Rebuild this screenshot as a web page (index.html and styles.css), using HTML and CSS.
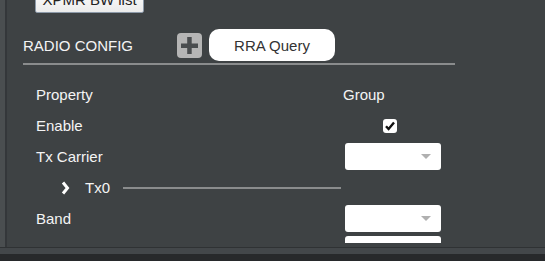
FILE: index.html
```html
<!DOCTYPE html>
<html lang="en">

<head>
    <meta charset="UTF-8">
    <meta name="viewport" content="width=device-width, initial-scale=1.0">
    <title>Radio Config</title>
    <link rel="stylesheet" href="styles.css">
</head>

<body>
    <div class="window">
        <div class="side"></div>
        <main class="panel">
            <button class="btn-top">XPMR BW list</button>
            <div class="header">
                <span class="title">RADIO CONFIG</span>
                <button class="btn-add">
                    <svg width="25" height="25" viewBox="0 0 25 25">
                        <rect x="4" y="10.5" width="17" height="4.5" fill="#4a4d4f" />
                        <rect x="10.2" y="4" width="4.5" height="17" fill="#4a4d4f" />
                    </svg>
                </button>
                <button class="btn-query">RRA Query</button>
            </div>
            <div class="rule"></div>
            <div class="props">
                <div class="row">
                    <span class="label">Property</span>
                    <span class="value">Group</span>
                </div>
                <div class="row">
                    <span class="label">Enable</span>
                    <span class="value">
                        <span class="check">
                            <svg width="14" height="14" viewBox="0 0 14 14">
                                <path d="M3 7.2 L5.6 10 L11 3.6" fill="none" stroke="#111" stroke-width="2.4" />
                            </svg>
                        </span>
                    </span>
                </div>
                <div class="row">
                    <span class="label">Tx Carrier</span>
                    <span class="value"><span class="select"><i class="caret"></i></span></span>
                </div>
                <div class="row group-row">
                    <svg class="chevron" width="9" height="14" viewBox="0 0 9 14">
                        <path d="M2 1.5 L6.5 7 L2 12.5" fill="none" stroke="#fff" stroke-width="3" />
                    </svg>
                    <span class="group-name">Tx0</span>
                    <span class="group-line"></span>
                </div>
                <div class="row">
                    <span class="label">Band</span>
                    <span class="value"><span class="select"><i class="caret"></i></span></span>
                </div>
                <div class="row">
                    <span class="label"></span>
                    <span class="value"><span class="select"><i class="caret"></i></span></span>
                </div>
            </div>
        </main>
    </div>
    <div class="statusbar"></div>
    <div class="bottom"></div>
</body>

</html>
```

FILE: styles.css
```css
* {
    box-sizing: border-box;
}

body {
    margin: 0;
    background-color: #27292b;
    font-family: "Liberation Sans", Arial, sans-serif;
    font-size: 15px;
    color: #f4f4f4;
    overflow: hidden;
}

.window {
    display: flex;
    height: 247px;
}

.side {
    width: 7px;
    background-color: #4a4e50;
    border-right: 2px solid #34373a;
}

.panel {
    flex: 1;
    background-color: #3e4244;
    padding-left: 16px;
    overflow: hidden;
}

.btn-top {
    display: block;
    margin: -14px 0 0 12px;
    width: 109px;
    height: 27px;
    padding: 0;
    border: 1px solid #8d9aa9;
    border-radius: 2px;
    background: linear-gradient(#ffffff, #ebebeb);
    font-family: inherit;
    font-size: 15px;
    line-height: 25px;
    color: #222;
}

.header {
    display: flex;
    align-items: center;
    height: 32px;
    margin-top: 16px;
}

.title {
    width: 154px;
    font-size: 15px;
}

.btn-add {
    width: 25px;
    height: 25px;
    padding: 0;
    border: none;
    border-radius: 4px;
    background-color: #b5b5b5;
}

.btn-add svg {
    display: block;
}

.btn-query {
    width: 126px;
    height: 32px;
    margin-left: 7px;
    padding: 0;
    border: none;
    border-radius: 10px;
    background-color: #fff;
    font-family: inherit;
    font-size: 15px;
    color: #333;
}

.rule {
    width: 432px;
    margin-top: 2px;
    border-top: 2px solid #8a8c8d;
}

.props {
    margin-top: 14px;
    height: 164px;
    overflow: hidden;
}

.row {
    display: flex;
    align-items: center;
    height: 31px;
}

.label {
    width: 320px;
    padding-left: 13px;
}

.value {
    display: flex;
    align-items: center;
}

.check {
    width: 14px;
    height: 14px;
    margin-left: 40px;
    border-radius: 3px;
    background-color: #fff;
}

.check svg {
    display: block;
}

.select {
    display: flex;
    align-items: center;
    justify-content: flex-end;
    width: 96px;
    height: 27px;
    margin-left: 2px;
    padding-right: 10px;
    border-radius: 3px;
    background-color: #fff;
}

.caret {
    width: 0;
    height: 0;
    border-left: 5px solid transparent;
    border-right: 5px solid transparent;
    border-top: 5px solid #b0b0b0;
}

.group-row {
    padding-left: 38px;
}

.group-name {
    margin-left: 15px;
}

.group-line {
    width: 218px;
    margin-left: 13px;
    border-top: 2px solid #8a8c8d;
}

.statusbar {
    height: 7px;
    background-color: #43474a;
    border-top: 1px solid #2f3234;
}

.bottom {
    height: 7px;
    background-color: #27292b;
}
```
